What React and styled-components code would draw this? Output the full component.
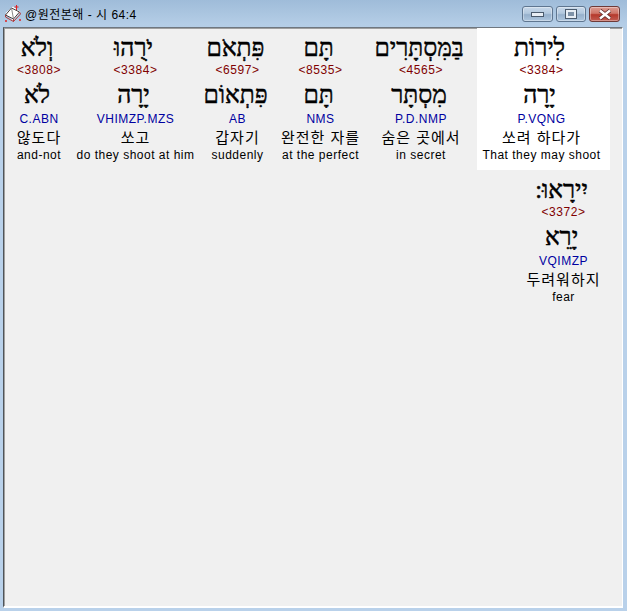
import React from "react";
import styled, { createGlobalStyle } from "styled-components";

const Global = createGlobalStyle`
  html, body { margin: 0; padding: 0; background: #b9d1ea; }
  #root { width: 627px; height: 611px; overflow: hidden; }
`;

const Window = styled.div`
  width: 627px;
  height: 611px;
  display: flex;
  flex-direction: column;
  box-sizing: border-box;
  padding: 0 4px 3px 3px;
  background: linear-gradient(180deg, #9fbcd9 0, #b4cde6 24px, #b9d1ea 60px);
  font-family: "Liberation Sans", "Noto Sans CJK KR", sans-serif;
`;

const TitleBar = styled.header`
  height: 27px;
  flex: none;
  display: flex;
  align-items: center;
`;

const AppIcon = styled.svg`
  width: 18px;
  height: 18px;
  flex: none;
  margin: 1px 0 0 1px;
`;

const Title = styled.h1`
  margin: 0 0 0 3px;
  flex: 1;
  font-size: 12px;
  font-weight: 400;
  letter-spacing: 0.5px;
  color: #000;
  white-space: nowrap;
`;

const Controls = styled.div`
  display: flex;
  gap: 3px;
  margin: 1px 3px 0 0;
`;

const WinButton = styled.div`
  width: ${(p) => p.$w}px;
  height: 16px;
  box-sizing: border-box;
  display: flex;
  align-items: center;
  justify-content: center;
  border: 1px solid ${(p) => (p.$close ? "#6e3a38" : "#5f7690")};
  border-radius: 3px;
  background: ${(p) =>
    p.$close
      ? "linear-gradient(180deg, #dc9c92 0, #cf7568 45%, #b5392c 55%, #c25c52 100%)"
      : "linear-gradient(180deg, #c9d9ea 0, #b2c8de 45%, #96b0cc 55%, #aec6de 100%)"};
  box-shadow: inset 0 0 0 1px rgba(255, 255, 255, 0.35);
`;

const Client = styled.main`
  flex: 1;
  min-height: 0;
  background: #f0f0f0;
  border-style: solid;
  border-width: 1px 1px 2px 1px;
  border-color: #6f7780 #fff #fff #4f5458;
  box-shadow: inset 1px 1px 0 #a0a0a0;
  padding: 0 12px 0 0;
  display: flex;
  flex-direction: column;
`;

const VerseRow = styled.section`
  display: flex;
  flex-direction: row-reverse;
  justify-content: flex-start;
  height: 142px;
  flex: none;
`;

const Word = styled.article`
  width: ${(p) => p.$w}px;
  flex: none;
  height: 142px;
  box-sizing: border-box;
  padding-right: 4px;
  display: flex;
  flex-direction: column;
  align-items: center;
  background: ${(p) => (p.$selected ? "#fff" : "transparent")};
  text-align: center;
  white-space: nowrap;
`;

const Hebrew = styled.div`
  height: ${(p) => (p.$lemma ? 28 : 31)}px;
  padding: ${(p) => (p.$lemma ? 0 : 3)}px 4px 0 0;
  direction: rtl;
  font-family: "Liberation Serif", "DejaVu Serif", serif;
  font-size: 24.5px;
  line-height: ${(p) => (p.$lemma ? 26 : 34)}px;
  font-weight: 400;
  -webkit-text-stroke: 0.5px #000;
  color: #000;
`;

const Strong = styled.div`
  height: 16px;
  margin-bottom: 4px;
  font-size: 12px;
  line-height: 16px;
  letter-spacing: 0.55px;
  color: #800000;
`;

const Morph = styled.div`
  height: 19px;
  font-size: 12px;
  line-height: 18px;
  letter-spacing: 0.5px;
  color: #0000a0;
`;

const Korean = styled.div`
  height: 18px;
  font-size: 15px;
  line-height: 18px;
  letter-spacing: 1px;
  color: #000;
`;

const English = styled.div`
  height: 16px;
  font-size: 12px;
  line-height: 16px;
  letter-spacing: 0.5px;
  color: #000;
`;

const words = [
  { w: 133, he: "לִירוֹת", s: "<3384>", l: "יָרָה", m: "P.VQNG", k: "쏘려 하다가", e: "That they may shoot", sel: true },
  { w: 108, he: "בַּמִּסְתָּרִים", s: "<4565>", l: "מִסְתָּר", m: "P.D.NMP", k: "숨은 곳에서", e: "in secret" },
  { w: 93, he: "תָּם", s: "<8535>", l: "תָּם", m: "NMS", k: "완전한 자를", e: "at the perfect" },
  { w: 73, he: "פִּתְאֹם", s: "<6597>", l: "פִּתְאוֹם", m: "AB", k: "갑자기", e: "suddenly" },
  { w: 131, he: "יֹרֻהוּ", s: "<3384>", l: "יָרָה", m: "VHIMZP.MZS", k: "쏘고", e: "do they shoot at him" },
  { w: 62, he: "וְלֹא", s: "<3808>", l: "לֹא", m: "C.ABN", k: "않도다", e: "and-not" },
];

const second = { w: 89, he: "יִירָאוּ:", s: "<3372>", l: "יָרֵא", m: "VQIMZP", k: "두려워하지", e: "fear" };

const WordCell = ({ word }) => (
  <Word $w={word.w} $selected={word.sel}>
    <Hebrew>{word.he}</Hebrew>
    <Strong>{word.s}</Strong>
    <Hebrew $lemma>{word.l}</Hebrew>
    <Morph>{word.m}</Morph>
    <Korean>{word.k}</Korean>
    <English>{word.e}</English>
  </Word>
);

export default function App() {
  return (
    <Window>
      <Global />
      <TitleBar>
        <AppIcon viewBox="0 0 18 18">
          <path d="M1.5 8 L9 1.5 L16.5 7 L9 15.5 Z" fill="#fff" />
          <path d="M1.5 10 L7.5 3 L15.5 7 L9.5 14 Z" fill="#fff" stroke="#4a4040" strokeWidth="1" />
          <path d="M1.5 10 L1.5 12 L9.5 16.5 L16.5 9 L15.5 7 M9.5 14 L9.5 16.5" fill="none" stroke="#b03c3c" strokeWidth="1" />
          <path d="M7.5 3 L9.5 14" stroke="#8a8a8a" strokeWidth="1" />
          <path d="M12.5 0 V5 M10.5 2 H14.5" stroke="#e02020" strokeWidth="1" />
          <circle cx="2" cy="16" r="1" fill="#e02020" />
          <circle cx="16" cy="15" r="1" fill="#e02020" />
        </AppIcon>
        <Title>@원전본해 - 시 64:4</Title>
        <Controls>
          <WinButton $w={31}>
            <svg width="13" height="5" viewBox="0 0 13 5"><rect x="0.5" y="0.5" width="12" height="4" fill="#e8eef5" stroke="#4a5a6c" /></svg>
          </WinButton>
          <WinButton $w={30}>
            <svg width="12" height="10" viewBox="0 0 12 10"><rect x="0.5" y="0.5" width="11" height="9" fill="#e8eef5" stroke="#4a5a6c" /><rect x="3" y="3" width="6" height="4" fill="#7f93a8" /></svg>
          </WinButton>
          <WinButton $w={31} $close>
            <svg width="14" height="11" viewBox="0 0 14 11"><path d="M2 1.5 L12 9.5 M12 1.5 L2 9.5" stroke="#5a2a28" strokeWidth="4" /><path d="M2 1.5 L12 9.5 M12 1.5 L2 9.5" stroke="#fff" strokeWidth="2.4" /></svg>
          </WinButton>
        </Controls>
      </TitleBar>
      <Client>
        <VerseRow>
          {words.map((w) => (
            <WordCell key={w.he} word={w} />
          ))}
        </VerseRow>
        <VerseRow>
          <WordCell word={second} />
        </VerseRow>
      </Client>
    </Window>
  );
}
